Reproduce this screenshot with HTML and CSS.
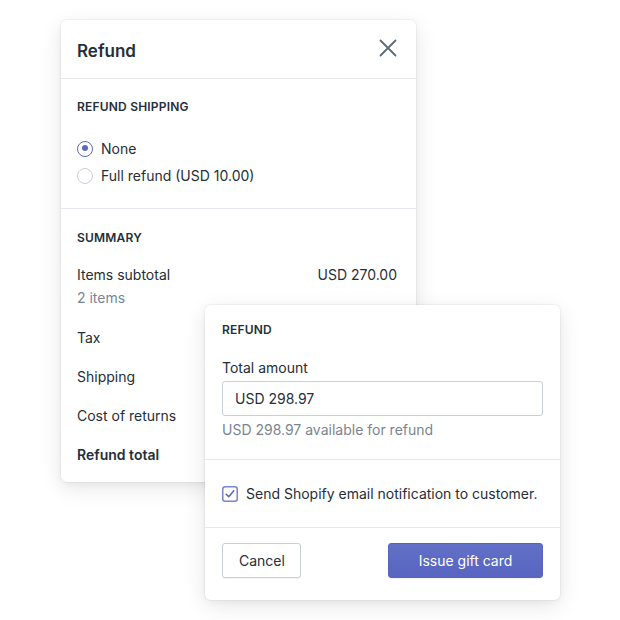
FILE: index.html
```html
<!DOCTYPE html>
<html lang="en">
<head>
    <meta charset="UTF-8" />
    <title>Refund</title>
    <link rel="stylesheet" href="styles.css">
</head>
<body>

<div class="stage">
    <div class="card card-back">
        <div class="card-header">
            <h2>Refund</h2>
            <svg class="close" width="18" height="18" viewBox="0 0 18 18">
                <path d="M1.5 1.5 L16.5 16.5 M16.5 1.5 L1.5 16.5" stroke="#5f6b79" stroke-width="1.8" stroke-linecap="round" fill="none"/>
            </svg>
        </div>

        <div class="section shipping">
            <h3>Refund shipping</h3>
            <label class="radio checked"><span class="dot"></span>None</label>
            <label class="radio"><span class="dot"></span>Full refund (USD 10.00)</label>
        </div>

        <div class="section summary">
            <h3>Summary</h3>
            <div class="row first">
                <span>Items subtotal</span>
                <span>USD 270.00</span>
            </div>
            <div class="sub">2 items</div>
            <div class="row">Tax</div>
            <div class="row">Shipping</div>
            <div class="row">Cost of returns</div>
            <div class="row total">Refund total</div>
        </div>
    </div>

    <div class="card card-front">
        <div class="section amount">
            <h3>Refund</h3>
            <div class="field-label">Total amount</div>
            <div class="input">USD 298.97</div>
            <div class="help">USD 298.97 available for refund</div>
        </div>
        <div class="section notify">
            <label class="check">
                <svg width="16" height="16" viewBox="0 0 16 16">
                    <rect x="0.75" y="0.75" width="14.5" height="14.5" rx="2.5" fill="#fff" stroke="#7a85cc" stroke-width="1.5"/>
                    <path d="M4.2 8.2 L6.8 10.8 L11.8 4.8" stroke="#5c6ac4" stroke-width="1.6" fill="none" stroke-linecap="round" stroke-linejoin="round"/>
                </svg>
                Send Shopify email notification to customer.
            </label>
        </div>
        <div class="actions">
            <button class="btn">Cancel</button>
            <button class="btn primary">Issue gift card</button>
        </div>
    </div>
</div>

</body>
</html>
```

FILE: styles.css
```css
body {
    margin: 0;
    background: #fff;
    font-family: Inter, "Noto Sans", sans-serif;
    font-size: 14px;
    color: #252e39;
}
.stage {
    position: relative;
    width: 620px;
    height: 620px;
    padding: 20px 0 0 61px;
    box-sizing: border-box;
}
.card {
    background: #fff;
    border-radius: 6px;
    box-shadow: 0 0 0 1px rgba(63,63,68,0.04), 0 2px 6px rgba(0,0,0,0.04), 0 6px 22px rgba(0,0,0,0.1);
}
.card-back {
    width: 355px;
    height: 462px;
}
.card-front {
    position: absolute;
    left: 205px;
    top: 305px;
    width: 355px;
    height: 295px;
}
.card-header {
    display: flex;
    justify-content: space-between;
    align-items: center;
    height: 59px;
    padding: 4px 19px 0 16px;
    box-sizing: border-box;
    border-bottom: 1px solid #e4e7eb;
}
.card-header h2 {
    margin: 0;
    font-size: 17px;
    font-weight: 600;
}
.close {
    display: block;
    margin-top: -6px;
}
.section {
    padding: 20px 19px 0 16px;
}
.shipping {
    height: 130px;
    box-sizing: border-box;
    border-bottom: 1px solid #e4e7eb;
}
h3 {
    margin: 0;
    font-size: 12px;
    font-weight: 600;
    text-transform: uppercase;
    letter-spacing: 0.2px;
    line-height: 16px;
}
.radio {
    display: flex;
    align-items: center;
    gap: 8px;
    height: 27px;
}
.shipping h3 {
    margin-bottom: 20px;
}
.dot {
    width: 16px;
    height: 16px;
    border: 1px solid #c9d0d7;
    border-radius: 50%;
    box-sizing: border-box;
    position: relative;
}
.radio.checked .dot {
    border: 1.5px solid #5c6ac4;
}
.radio.checked .dot::after {
    content: "";
    position: absolute;
    left: 3.5px;
    top: 3.5px;
    width: 6px;
    height: 6px;
    border-radius: 50%;
    background: #5c6ac4;
}
.summary {
    padding-top: 21px;
}
.summary h3 {
    margin-bottom: 19px;
}
.row {
    display: flex;
    justify-content: space-between;
    line-height: 20px;
    margin-bottom: 19px;
}
.row.first {
    margin-bottom: 3px;
}
.sub {
    color: #7a8593;
    line-height: 20px;
    margin-bottom: 20px;
}
.total {
    font-weight: 600;
}
.amount {
    padding: 17px 17px 0 17px;
    height: 155px;
    box-sizing: border-box;
    border-bottom: 1px solid #e4e7eb;
}
.field-label {
    margin-top: 20px;
    line-height: 20px;
}
.input {
    margin-top: 3px;
    height: 35px;
    border: 1px solid #c9d0d7;
    border-radius: 3px;
    box-sizing: border-box;
    padding: 0 12px;
    display: flex;
    align-items: center;
}
.help {
    margin-top: 5px;
    color: #7a8593;
    line-height: 18px;
}
.notify {
    height: 68px;
    box-sizing: border-box;
    padding: 0 17px;
    display: flex;
    align-items: center;
    border-bottom: 1px solid #e4e7eb;
}
.check {
    display: flex;
    align-items: center;
    gap: 8px;
}
.check svg {
    display: block;
}
.actions {
    display: flex;
    justify-content: space-between;
    padding: 15px 17px 0 17px;
}
.btn {
    height: 35px;
    padding: 0 16px;
    border: 1px solid #c9d0d7;
    border-radius: 3px;
    background: #fff;
    color: #252e39;
    font-family: inherit;
    font-size: 14px;
    width: 79px;
    box-shadow: 0 1px 0 rgba(22,29,37,0.05);
}
.btn.primary {
    width: 155px;
    background: linear-gradient(#6270c7, #5865c1);
    border-color: #5563c1;
    color: #fff;
}
```
